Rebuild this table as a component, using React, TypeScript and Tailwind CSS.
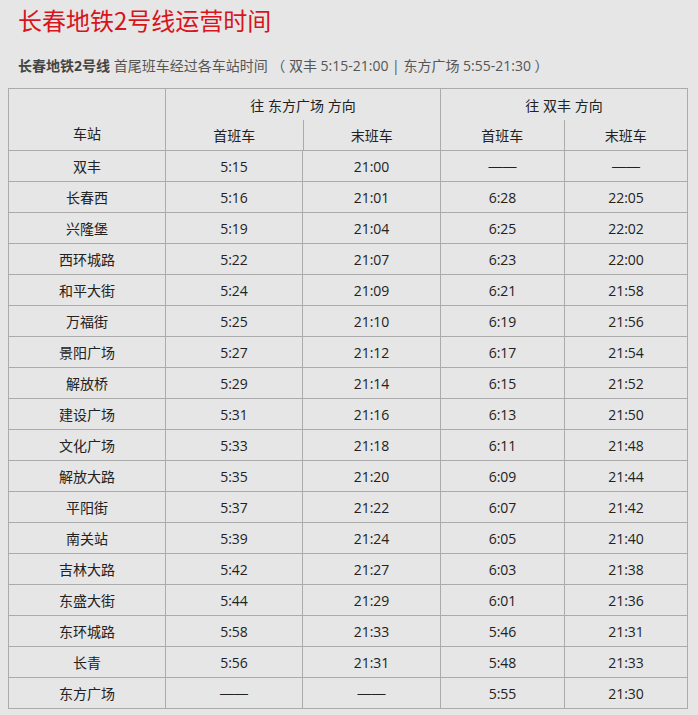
import React from 'react';

// ── Data ──────────────────────────────────────────────────────────────────────

type Row = [string, string, string, string, string];

const DASH = '——';

const ROWS: Row[] = [
  ['双丰', '5:15', '21:00', DASH, DASH],
  ['长春西', '5:16', '21:01', '6:28', '22:05'],
  ['兴隆堡', '5:19', '21:04', '6:25', '22:02'],
  ['西环城路', '5:22', '21:07', '6:23', '22:00'],
  ['和平大街', '5:24', '21:09', '6:21', '21:58'],
  ['万福街', '5:25', '21:10', '6:19', '21:56'],
  ['景阳广场', '5:27', '21:12', '6:17', '21:54'],
  ['解放桥', '5:29', '21:14', '6:15', '21:52'],
  ['建设广场', '5:31', '21:16', '6:13', '21:50'],
  ['文化广场', '5:33', '21:18', '6:11', '21:48'],
  ['解放大路', '5:35', '21:20', '6:09', '21:44'],
  ['平阳街', '5:37', '21:22', '6:07', '21:42'],
  ['南关站', '5:39', '21:24', '6:05', '21:40'],
  ['吉林大路', '5:42', '21:27', '6:03', '21:38'],
  ['东盛大街', '5:44', '21:29', '6:01', '21:36'],
  ['东环城路', '5:58', '21:33', '5:46', '21:31'],
  ['长青', '5:56', '21:31', '5:48', '21:33'],
  ['东方广场', DASH, DASH, '5:55', '21:30'],
];

// ── Cells ─────────────────────────────────────────────────────────────────────

function Cell({ value }: { value: string }) {
  const isDash = value === DASH;
  return (
    <div className="flex h-[30px] items-center justify-center bg-[#e6e6e6]">
      {isDash ? (
        // Arial-width em dashes join into one ~28px rule, like the original
        <span className="font-['Liberation_Sans',sans-serif]">{value}</span>
      ) : (
        value
      )}
    </div>
  );
}

/** Direction header: title on top, first/last train below, no rule between them. */
function DirectionHead({ title, left, right }: { title: string; left: string; right: string }) {
  return (
    <div className="col-span-2 flex flex-col bg-[#e6e6e6]">
      <div className="flex h-[31px] items-center justify-center pt-px">{title}</div>
      <div className="flex h-[30px]">
        <div className="flex flex-1 items-center justify-center">{left}</div>
        <div className="w-px bg-[#ababab]" />
        <div className="flex flex-1 items-center justify-center">{right}</div>
      </div>
    </div>
  );
}

// ── Page ──────────────────────────────────────────────────────────────────────

export default function App() {
  return (
    <div className="min-h-[715px] bg-[#e6e6e6] px-2 pt-[6px] font-['Open_Sans','Noto_Sans_CJK_SC',sans-serif] text-[#222]">
      <h1 className="ml-[10px] font-['Noto_Sans_CJK_SC',sans-serif] text-[24px] leading-[28px] text-[#d8141d]">
        长春地铁2号线运营时间
      </h1>

      <p className="ml-[10px] mt-[22px] text-[14px] leading-[20px] text-[#555]">
        <b className="text-[#444]">长春地铁2号线</b> 首尾班车经过各车站时间 （ 双丰 5:15-21:00 | 东方广场 5:55-21:30 ）
      </p>

      {/* Timetable — 1px gaps over a grey backdrop act as the cell borders */}
      <div className="mt-[12px] grid w-[680px] grid-cols-[156px_136px_137px_123px_122px] gap-px bg-[#ababab] p-px text-[14px]">
        <div className="flex h-[61px] items-end justify-center bg-[#e6e6e6] pb-[6px]">车站</div>
        <DirectionHead title="往 东方广场 方向" left="首班车" right="末班车" />
        <DirectionHead title="往 双丰 方向" left="首班车" right="末班车" />

        {ROWS.map((row) =>
          row.map((v, i) => <Cell key={`${row[0]}-${i}`} value={v} />),
        )}
      </div>
    </div>
  );
}
